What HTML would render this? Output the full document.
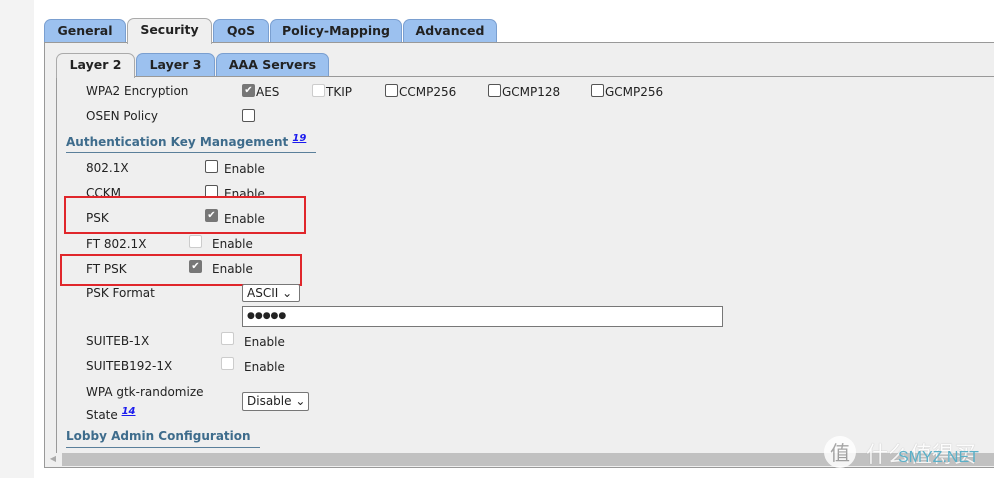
<!DOCTYPE html><html><head><style>
body{margin:0;width:994px;height:478px;background:#fff;position:relative;overflow:hidden;font-family:"DejaVu Sans","Liberation Sans",sans-serif;font-size:12px;color:#222}
.a{position:absolute;white-space:nowrap}
.tab{position:absolute;height:22px;top:19px;background:#9cc1ef;border:1px solid #7a9fd0;border-bottom:none;border-radius:7px 7px 0 0;font-weight:bold;font-size:12.5px;text-align:center;line-height:22px;color:#222}
.cb{position:absolute;width:11px;height:11px;border:1px solid #555;border-radius:2px;background:#fff}
.cbd{border-color:#ccc}
.chk{background:#777;border-color:#777;color:#fff;font-size:10px;line-height:11px;text-align:center}
.h{position:absolute;left:66px;font-weight:bold;color:#3e6c8c;font-size:12px;white-space:nowrap}
.red{position:absolute;border:2px solid #e0262b}
sup a{color:#1a1aee;font-style:italic;font-weight:bold;text-decoration:underline}
</style></head><body>
<div class="a" style="left:0;top:0;width:34px;height:478px;background:#f3f3f3"></div>
<div class="a" style="left:44px;top:42px;width:960px;height:424px;background:#efefef;border:1px solid #999"></div>
<div class="tab" style="left:44px;width:80px">General</div>
<div class="tab" style="left:127px;width:83px;background:#efefef;border-color:#aaa;top:18px;height:25px">Security</div>
<div class="tab" style="left:213px;width:54px">QoS</div>
<div class="tab" style="left:270px;width:130px">Policy-Mapping</div>
<div class="tab" style="left:403px;width:92px">Advanced</div>
<div class="a" style="left:56px;top:76px;width:940px;height:376px;border-left:1px solid #999;border-top:1px solid #999"></div>
<div class="tab" style="left:56px;top:53px;width:77px;background:#efefef;border-color:#aaa;height:24px">Layer 2</div>
<div class="tab" style="left:136px;top:53px;width:77px">Layer 3</div>
<div class="tab" style="left:216px;top:53px;width:111px">AAA Servers</div>
<div class="a" style="left:86px;top:84px">WPA2 Encryption</div>
<div class="cb chk" style="left:242px;top:84px">✔</div><div class="a" style="left:256px;top:85px">AES</div>
<div class="cb cbd" style="left:312px;top:84px"></div><div class="a" style="left:326px;top:85px">TKIP</div>
<div class="cb" style="left:385px;top:84px"></div><div class="a" style="left:399px;top:85px">CCMP256</div>
<div class="cb" style="left:488px;top:84px"></div><div class="a" style="left:502px;top:85px">GCMP128</div>
<div class="cb" style="left:591px;top:84px"></div><div class="a" style="left:605px;top:85px">GCMP256</div>
<div class="a" style="left:86px;top:109px">OSEN Policy</div>
<div class="cb" style="left:242px;top:109px"></div>
<div class="h" style="top:133px;border-bottom:1px solid #5a7f9a;width:250px;padding-bottom:3px">Authentication Key Management <sup><a>19</a></sup></div>
<div class="a" style="left:86px;top:161px">802.1X</div><div class="cb" style="left:205px;top:160px"></div><div class="a" style="left:224px;top:162px">Enable</div>
<div class="a" style="left:86px;top:186px">CCKM</div><div class="cb" style="left:205px;top:185px"></div><div class="a" style="left:224px;top:187px">Enable</div>
<div class="red" style="left:64px;top:196px;width:238px;height:34px"></div>
<div class="a" style="left:86px;top:211px">PSK</div><div class="cb chk" style="left:205px;top:209px">✔</div><div class="a" style="left:224px;top:212px">Enable</div>
<div class="a" style="left:86px;top:237px">FT 802.1X</div><div class="cb cbd" style="left:189px;top:235px"></div><div class="a" style="left:212px;top:237px">Enable</div>
<div class="red" style="left:60px;top:254px;width:238px;height:28px"></div>
<div class="a" style="left:86px;top:262px">FT PSK</div><div class="cb chk" style="left:189px;top:260px">✔</div><div class="a" style="left:212px;top:262px">Enable</div>
<div class="a" style="left:86px;top:286px">PSK Format</div>
<div class="a" style="left:242px;top:284px;height:18px;border:1px solid #777;border-radius:2px;background:#fff;line-height:16px;padding-left:4px;box-sizing:border-box;width:58px">ASCII ⌄</div>
<div class="a" style="left:242px;top:306px;width:481px;height:21px;box-sizing:border-box;border:1px solid #777;background:#fff;line-height:19px;padding-left:4px;font-size:9px">●●●●●</div>
<div class="a" style="left:86px;top:334px">SUITEB-1X</div><div class="cb cbd" style="left:221px;top:332px"></div><div class="a" style="left:244px;top:335px">Enable</div>
<div class="a" style="left:86px;top:359px">SUITEB192-1X</div><div class="cb cbd" style="left:221px;top:357px"></div><div class="a" style="left:244px;top:360px">Enable</div>
<div class="a" style="left:86px;top:382px;line-height:20px">WPA gtk-randomize<br>State <sup><a>14</a></sup></div>
<div class="a" style="left:242px;top:392px;width:67px;height:19px;border:1px solid #777;border-radius:2px;background:#fff;line-height:17px;padding-left:4px;box-sizing:border-box">Disable ⌄</div>
<div class="h" style="top:429px;border-bottom:1px solid #5a7f9a;width:194px;padding-bottom:4px">Lobby Admin Configuration</div>
<div class="a" style="left:46px;top:452px;width:14px;height:14px;color:#aaa;font-size:8px;line-height:14px;text-align:center">◀</div>
<div class="a" style="left:62px;top:453px;width:932px;height:13px;background:#c1c1c1"></div>
<div class="a" style="left:824px;top:436px;width:32px;height:32px;border-radius:50%;background:#fff;opacity:.85;color:#999;font-size:20px;line-height:32px;text-align:center;font-family:'Noto Sans CJK SC',sans-serif">值</div>
<div class="a" style="left:866px;top:437px;color:#fff;opacity:.85;font-size:22px;font-family:'Noto Sans CJK SC',sans-serif;text-shadow:0 0 1px #999">什么值得买</div>
<div class="a" style="left:898px;top:449px;color:#5ab0c8;font-size:16px;font-family:'Liberation Sans',sans-serif">SMYZ.NET</div>
</body></html>
